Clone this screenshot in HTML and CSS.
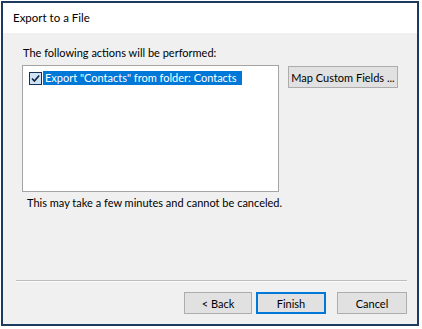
FILE: index.html
```html
<!DOCTYPE html>
<html>
<head>
<meta charset="utf-8">
<title>Export to a File</title>
<link rel="stylesheet" href="styles.css">
</head>
<body>
<div class="dialog">
  <div class="titlebar">Export to a File</div>
  <div class="content">
    <div class="main">
      <div class="caption">The following actions will be performed:</div>
      <div class="row">
        <ul class="listbox">
          <li class="item">
            <svg class="check" width="13" height="13" viewBox="0 0 13 13">
              <rect x="0.5" y="0.5" width="12" height="12" fill="#cfe3f6" stroke="#1b2f52"/>
              <path d="M3 6.5 L5.4 9 L10.2 3.4" fill="none" stroke="#14243f" stroke-width="1.6"/>
            </svg>
            <span class="label">Export "Contacts" from folder: Contacts</span>
          </li>
        </ul>
        <button class="btn map">Map Custom Fields ...</button>
      </div>
      <div class="note">This may take a few minutes and cannot be canceled.</div>
    </div>
    <div class="rule"></div>
    <div class="actions">
      <button class="btn back">&lt; Back</button>
      <button class="btn finish">Finish</button>
      <button class="btn cancel">Cancel</button>
    </div>
  </div>
</div>
</body>
</html>
```
FILE: styles.css
```css
*{margin:0;padding:0;box-sizing:border-box;}
ul,li{list-style:none;}
body{background:#fff;font:11px "Lato","Liberation Sans",sans-serif;color:#000;}
.dialog{width:418px;height:325px;margin:1px;border:2px solid #1d3a5f;background:#f0f0f0;display:flex;flex-direction:column;}
.titlebar{height:30px;line-height:30px;padding-left:10px;background:#fff;font-size:11.5px;}
.content{flex:1;display:flex;flex-direction:column;padding:13px 10px 10px 13px;}
.main{flex:1;padding-left:6px;}
.caption{line-height:14px;padding-left:1px;}
.row{display:flex;align-items:flex-start;gap:9px;margin-top:5px;}
.listbox{width:257px;height:127px;border:1px solid #a5a5a5;background:#fff;padding:5px 6px;}
.item{display:flex;align-items:center;height:14px;}
.check{display:block;flex:none;}
.label{background:#0078d7;color:#fff;height:14px;line-height:14px;padding:0 5px 0 2px;margin-left:1px;}
.btn{font:inherit;color:#000;background:#e1e1e1;border:1px solid #adadad;height:22px;}
.map{width:110px;margin-top:1px;}
.note{line-height:14px;padding-left:5px;margin-top:4px;}
.rule{height:2px;border-top:1px solid #bcbcbc;border-bottom:1px solid #fbfbfb;}
.actions{display:flex;justify-content:flex-end;margin-top:10px;}
.actions .btn{width:70px;}
.actions .back{width:68px;}
.finish{margin-left:4px;border:2px solid #0078d7;}
.cancel{margin-left:11px;}
```
